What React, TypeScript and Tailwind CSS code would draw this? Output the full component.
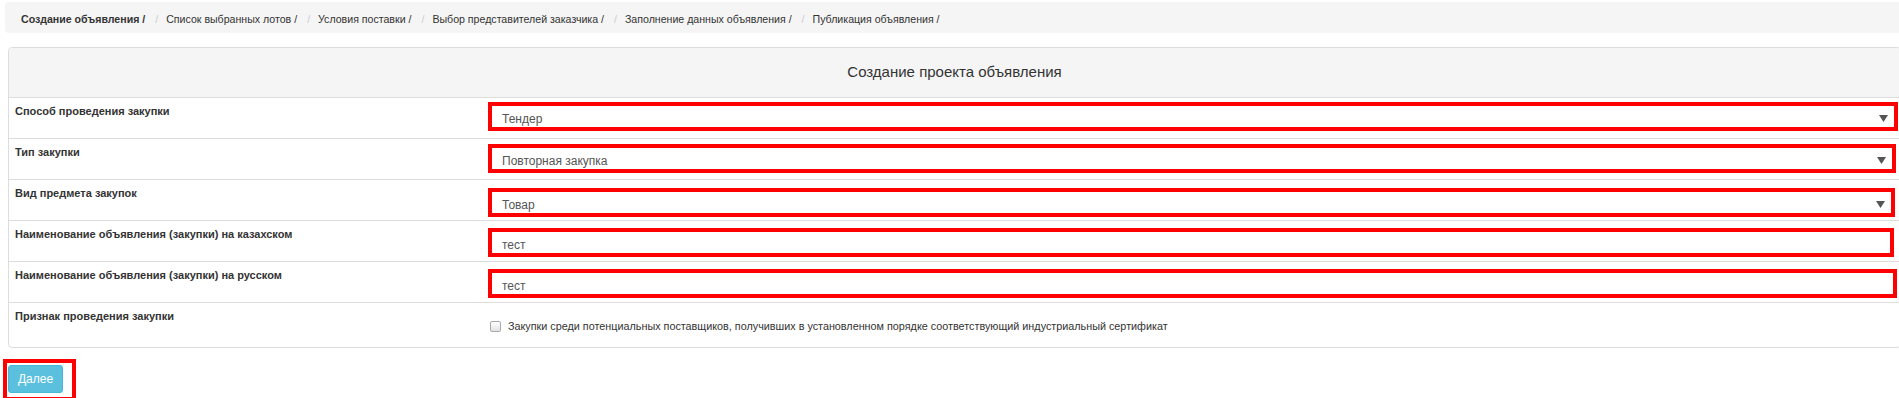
import React from "react";

const crumbs = [
  "Создание объявления /",
  "Список выбранных лотов /",
  "Условия поставки /",
  "Выбор представителей заказчика /",
  "Заполнение данных объявления /",
  "Публикация объявления /",
];

interface FieldRow {
  label: string;
  value: string;
  select?: boolean;
  top: string;
  right: string;
}

const rows: FieldRow[] = [
  { label: "Способ проведения закупки", value: "Тендер", select: true, top: "mt-[4px]", right: "mr-[2px]" },
  { label: "Тип закупки", value: "Повторная закупка", select: true, top: "mt-[5px]", right: "mr-[4px]" },
  { label: "Вид предмета закупок", value: "Товар", select: true, top: "mt-[8px]", right: "mr-[5px]" },
  { label: "Наименование объявления (закупки) на казахском", value: "тест", top: "mt-[7px]", right: "mr-[6px]" },
  { label: "Наименование объявления (закупки) на русском", value: "тест", top: "mt-[7px]", right: "mr-[3px]" },
];

const Caret = () => (
  <svg width="9" height="7" viewBox="0 0 9 7" className="shrink-0">
    <polygon points="0,0 9,0 4.5,7" fill="#555" />
  </svg>
);

export default function App() {
  return (
    <div className="h-[398px] overflow-hidden bg-white text-[#333] font-['Liberation_Sans',Arial,sans-serif]">
      {/* breadcrumb */}
      <div className="pt-[2px] pl-[5px]">
        <ol className="flex items-center h-[31px] bg-[#f5f5f5] rounded-l-[4px] pl-[16px] pt-[3px] text-[10.6px] leading-[15px]">
          {crumbs.map((c, i) => (
            <li key={c} className="flex items-center">
              {i > 0 && <span className="text-[#ccc] ml-[10px] mr-[8px]">/</span>}
              <span className={i === 0 ? "font-bold" : ""}>{c}</span>
            </li>
          ))}
        </ol>
      </div>

      {/* panel */}
      <div className="mt-[14px] ml-2 w-[1893px] border border-[#ddd] rounded-[4px]">
        <div className="h-[50px] bg-[#f5f5f5] border-b border-[#ddd] rounded-t-[4px] flex items-center justify-center text-[15px]">
          Создание проекта объявления
        </div>

        {rows.map((r) => (
          <div key={r.label} className="flex h-[41px] border-b border-[#ddd]">
            <div className="w-[479px] shrink-0 pl-[6px] pt-[6px] text-[11px] leading-[15px] font-bold">
              {r.label}
            </div>
            <div className="flex-1 min-w-0">
              <div
                className={`${r.top} ${r.right} h-[29px] border-4 border-[#ff0000] bg-white flex items-center justify-between pl-[10px] pr-[6px] pt-[4px] text-[12px] text-[#555]`}
              >
                <span>{r.value}</span>
                {r.select && <Caret />}
              </div>
            </div>
          </div>
        ))}

        <div className="flex h-[44px]">
          <div className="w-[479px] shrink-0 pl-[6px] pt-[6px] text-[11px] leading-[15px] font-bold">
            Признак проведения закупки
          </div>
          <div className="flex-1 flex items-start pt-[16px] pl-[2px] text-[10.8px] leading-[15px]">
            <span className="mt-[2px] w-[11px] h-[11px] border border-[#a9a9a9] rounded-[2px] bg-linear-to-b from-white to-[#e2e2e2] shrink-0" />
            <span className="ml-[7px]">
              Закупки среди потенциальных поставщиков, получивших в установленном порядке соответствующий индустриальный сертификат
            </span>
          </div>
        </div>
      </div>

      {/* footer button */}
      <div className="mt-[11px] ml-[3px] inline-flex border-4 border-[#ff0000] pl-[1px] pt-[2px] pr-[9px] pb-[4px]">
        <button className="w-[55px] h-[28px] bg-[#5bc0de] border border-[#46b8da] rounded-[3px] text-white text-[12px] leading-none">
          Далее
        </button>
      </div>
    </div>
  );
}
